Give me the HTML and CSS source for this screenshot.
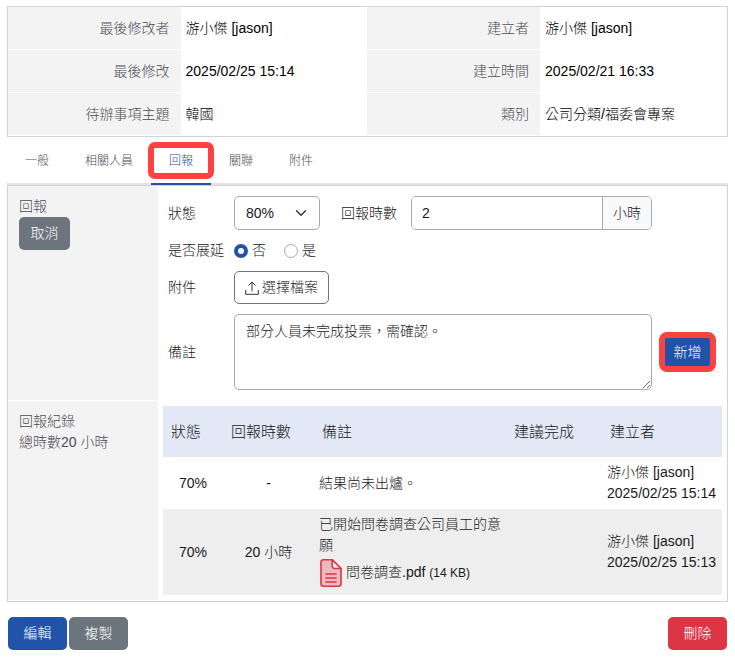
FILE: index.html
```html
<!DOCTYPE html>
<html lang="zh-Hant">
<head>
<meta charset="utf-8">
<meta name="viewport" content="width=device-width, initial-scale=1">
<title>待辦事項</title>
<link rel="stylesheet" href="styles.css">
</head>
<body>
<table class="info">
  <tbody>
    <tr><th scope="row">最後修改者</th><td>游小傑 [jason]</td><th scope="row">建立者</th><td>游小傑 [jason]</td></tr>
    <tr><th scope="row">最後修改</th><td>2025/02/25 15:14</td><th scope="row">建立時間</th><td>2025/02/21 16:33</td></tr>
    <tr><th scope="row">待辦事項主題</th><td>韓國</td><th scope="row">類別</th><td>公司分類/福委會專案</td></tr>
  </tbody>
</table>

<nav class="tabs">
  <a class="tab" href="#general">一般</a>
  <a class="tab" href="#people">相關人員</a>
  <a class="tab tab-active" href="#report" aria-current="page">回報</a>
  <a class="tab" href="#related">關聯</a>
  <a class="tab" href="#files">附件</a>
</nav>

<main class="panel">
  <section class="panel-row">
    <div class="side">
      <div>回報</div>
      <button class="btn btn-grey btn-compact" type="button">取消</button>
    </div>
    <form class="report">
      <label for="status">狀態</label>
      <div class="field-line">
        <div class="select-wrap">
          <select id="status"><option>80%</option><option>90%</option><option>100%</option></select>
          <svg class="chevron" viewBox="0 0 16 16" aria-hidden="true"><path d="M2 5l6 6 6-6"/></svg>
        </div>
        <label class="hours-label" for="hours">回報時數</label>
        <div class="input-group">
          <input id="hours" type="text" value="2">
          <span class="addon">小時</span>
        </div>
      </div>

      <span id="extend-label">是否展延</span>
      <div class="radios" role="radiogroup" aria-labelledby="extend-label">
        <label class="radio"><input type="radio" name="extend" checked>否</label>
        <label class="radio"><input type="radio" name="extend">是</label>
      </div>

      <span>附件</span>
      <div class="field-line">
        <button class="btn btn-outline" type="button">
          <svg class="upload" viewBox="0 0 14 14" aria-hidden="true"><path d="M7 10.5V1M3.5 4.5L7 1l3.500 3.500M.7 9v4.300h12.600V9"/></svg>選擇檔案
        </button>
      </div>

      <label for="note">備註</label>
      <textarea id="note">部分人員未完成投票，需確認。</textarea>
      <button class="add" type="button">新增</button>
    </form>
  </section>

  <section class="panel-row">
    <div class="side">
      <div>回報紀錄</div>
      <div>總時數20 小時</div>
    </div>
    <div class="history-wrap">
      <table class="history">
        <colgroup><col class="c-status"><col class="c-hours"><col><col class="c-suggest"><col class="c-author"></colgroup>
        <thead>
          <tr><th>狀態</th><th>回報時數</th><th>備註</th><th>建議完成</th><th>建立者</th></tr>
        </thead>
        <tbody>
          <tr>
            <td class="center">70%</td><td class="center">-</td><td>結果尚未出爐。</td><td></td>
            <td>游小傑 [jason]<br>2025/02/25 15:14</td>
          </tr>
          <tr>
            <td class="center">70%</td><td class="center">20 小時</td>
            <td>已開始問卷調查公司員工的意願
              <div class="file">
                <svg class="file-icon" viewBox="0 0 24 30" aria-hidden="true">
                  <path class="page" d="M4.500 1.700h8.700l8.800 8.800v15.300a2.500 2.500 0 0 1-2.500 2.500h-15a2.500 2.500 0 0 1-2.500-2.500V4.200a2.500 2.500 0 0 1 2.500-2.500z"/>
                  <path class="fold" d="M13.200 1.700v6.300a2.500 2.500 0 0 0 2.500 2.500H22z"/>
                  <path class="lines" d="M7 16h10M7 20h10M7 24h10"/>
                </svg>
                <span>問卷調查.pdf <span class="size">(14 KB)</span></span>
              </div>
            </td>
            <td></td>
            <td>游小傑 [jason]<br>2025/02/25 15:13</td>
          </tr>
        </tbody>
      </table>
    </div>
  </section>
</main>

<footer class="actions">
  <button class="btn btn-blue" type="button">編輯</button>
  <button class="btn btn-grey" type="button">複製</button>
  <button class="btn btn-red" type="button">刪除</button>
</footer>
</body>
</html>
```

FILE: styles.css
```css
:root {
  --blue: #2153a9;
  --grey: #6c757d;
  --red: #dc3545;
  --mark: #ff4141;
  --line: #d3d3d3;
  --field: #a9a9a9;
  --side: #f3f3f3;
  --muted: #4c4c55;
}

* { box-sizing: border-box; }

body {
  margin: 0;
  padding: 6px 7px;
  background: #fff;
  color: #16191c;
  font: 300 14px/21px "Liberation Sans", "Noto Sans CJK TC", sans-serif;
}

button, input, select, textarea { font: inherit; color: inherit; margin: 0; }

table { width: 100%; table-layout: fixed; border-spacing: 0; }

/* Summary */
.info { border: 1px solid var(--line); color: #000; }
.info th, .info td { height: 43px; padding: 0; font-weight: inherit; }
.info th {
  width: 24%;
  padding-right: 11px;
  border-bottom: 1px solid #fff;
  background: var(--side);
  color: var(--muted);
  text-align: right;
}
.info td { width: 26%; padding-left: 5px; text-align: left; }

/* Tabs */
.tabs { display: flex; border-bottom: 2px solid #e3e4e6; }
.tab {
  position: relative;
  height: 48px;
  margin-bottom: -2px;
  padding: 0 18px;
  border-bottom: 2px solid transparent;
  color: var(--muted);
  font-size: 12px;
  line-height: 48px;
  text-decoration: none;
}
.tab-active { border-color: var(--blue); color: var(--blue); }
.tab-active::after {
  content: "";
  position: absolute;
  inset: 5px -3px 4px;
  border: 6px solid var(--mark);
  border-radius: 7px;
}

/* Panel */
.panel { border: 1px solid var(--line); }
.panel-row { display: grid; grid-template-columns: 150px 1fr; }
.side {
  padding: 10px 11px;
  border-bottom: 1px solid #fff;
  background: var(--side);
  color: var(--muted);
}

.btn {
  min-width: 59px;
  height: 33px;
  padding: 0 10px;
  border: 0;
  border-radius: 5px;
  color: #fff;
}
.btn-compact { min-width: 51px; }
.btn-blue { background: var(--blue); }
.btn-grey { background: var(--grey); }
.btn-red { background: var(--red); }
.btn-outline {
  display: flex;
  align-items: center;
  gap: 3px;
  border: 1px solid var(--grey);
  background: #fff;
  color: #16191c;
}
.upload { width: 14px; height: 14px; fill: none; stroke: #333; }

/* Report form */
.report {
  display: grid;
  grid-template-columns: 56px 1fr 57px;
  gap: 10px;
  align-items: center;
  padding: 10px 11px 11px 10px;
}
.report > * { grid-column: 2; margin-right: -3px; }
.report > label, .report > span { grid-column: 1; margin-right: 0; }
.field-line, .radios { display: flex; align-items: center; }
.report .add { grid-column: 3; margin-right: 0; }

.select-wrap { position: relative; width: 86px; }
select {
  width: 100%;
  height: 34px;
  padding: 0 11px;
  border: 1px solid var(--field);
  border-radius: 5px;
  background: #fff;
  appearance: none;
}
.chevron {
  position: absolute;
  top: 11px;
  right: 13px;
  width: 12px;
  height: 12px;
  fill: none;
  stroke: #343a40;
  stroke-width: 2;
  stroke-linecap: round;
  stroke-linejoin: round;
  pointer-events: none;
}
.hours-label { margin: 0 14px 0 21px; white-space: nowrap; }
.input-group {
  display: flex;
  flex: 1;
  min-width: 0;
  height: 34px;
  border: 1px solid var(--field);
  border-radius: 5px;
  overflow: hidden;
}
.input-group input {
  flex: 1;
  min-width: 0;
  padding: 0 10px;
  border: 0;
}
.addon {
  padding: 0 10px;
  border-left: 1px solid var(--field);
  background: #f8f9fa;
  line-height: 32px;
}

.radios { gap: 18px; }
.radio { display: flex; align-items: center; gap: 4px; }
.radio input {
  width: 14px;
  height: 14px;
  border: 1px solid var(--field);
  border-radius: 50%;
  background: #fff;
  appearance: none;
}
.radio input:checked { border: 4px solid var(--blue); }

textarea {
  display: block;
  height: 76px;
  padding: 6px 11px;
  border: 1px solid var(--field);
  border-radius: 5px;
  background: #fff;
  resize: vertical;
}
.add {
  height: 40px;
  padding: 0;
  border: 6px solid var(--mark);
  border-radius: 8px;
  background: var(--blue);
  color: #fff;
}

/* History */
.history-wrap { padding: 5px 5px 6px; }
.history th, .history td { padding: 5px; }
.history th {
  height: 51px;
  padding: 0 8px;
  background: #e2e8f5;
  font-size: 15px;
  font-weight: inherit;
  text-align: left;
  white-space: nowrap;
}
.history tbody tr:nth-child(even) { background: #eee; }
.history .center { text-align: center; }
.c-status { width: 60px; }
.c-hours { width: 91px; }
.c-suggest { width: 96px; }
.c-author { width: 120px; }
.file { display: flex; align-items: center; gap: 3px; height: 34px; white-space: nowrap; }
.file-icon { width: 24px; height: 30px; }
.file-icon path { stroke: var(--red); stroke-width: 1.6; stroke-linejoin: round; }
.page { fill: #ebb9bf; }
.fold { fill: #eee; }
.lines { fill: none; stroke-linecap: round; }
.size { font-size: 12px; }

.actions { display: flex; gap: 2px; padding: 15px 1px 0; }
.btn-red { margin-left: auto; }
```
